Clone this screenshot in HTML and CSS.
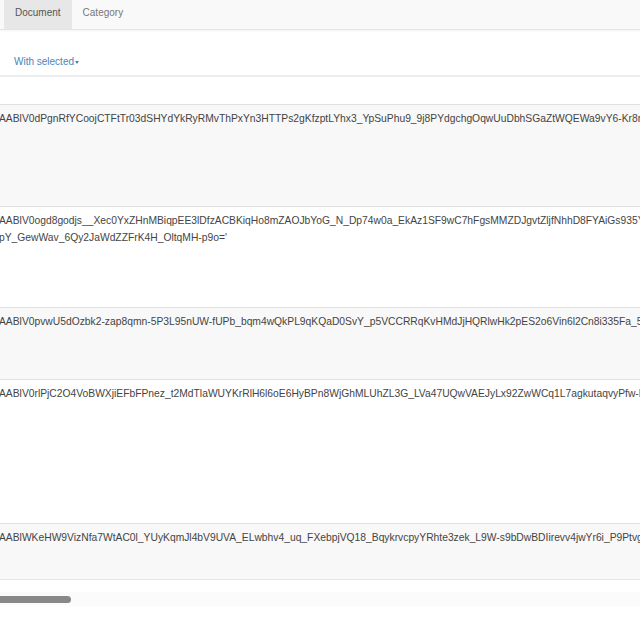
FILE: index.html
```html
<!DOCTYPE html>
<html lang="en">
<head>
    <meta charset="UTF-8">
    <title>Documents</title>
    <link rel="stylesheet" href="styles.css">
</head>
<body>

<div class="navbar">
    <ul class="nav">
        <li class="active"><a href="#">Document</a></li>
        <li><a href="#">Category</a></li>
    </ul>
</div>

<div class="actions">
    <a href="#" class="dropdown">With selected<span class="caret"></span></a>
</div>

<div class="table-wrap">
    <table class="grid">
        <tr class="r1"><td>AABlV0dPgnRfYCoojCTFtTr03dSHYdYkRyRMvThPxYn3HTTPs2gKfzptLYhx3_YpSuPhu9_9j8PYdgchgOqwUuDbhSGaZtWQEWa9vY6-Kr8ry</td></tr>
        <tr class="r2"><td>AABlV0ogd8godjs__Xec0YxZHnMBiqpEE3lDfzACBKiqHo8mZAOJbYoG_N_Dp74w0a_EkAz1SF9wC7hFgsMMZDJgvtZljfNhhD8FYAiGs935Y<br>pY_GewWav_6Qy2JaWdZZFrK4H_OltqMH-p9o='</td></tr>
        <tr class="r3"><td>AABlV0pvwU5dOzbk2-zap8qmn-5P3L95nUW-fUPb_bqm4wQkPL9qKQaD0SvY_p5VCCRRqKvHMdJjHQRlwHk2pES2o6Vin6l2Cn8i335Fa_5</td></tr>
        <tr class="r4"><td>AABlV0rlPjC2O4VoBWXjiEFbFPnez_t2MdTlaWUYKrRlH6l6oE6HyBPn8WjGhMLUhZL3G_LVa47UQwVAEJyLx92ZwWCq1L7agkutaqvyPfw-R</td></tr>
        <tr class="r5"><td>AABlWKeHW9VizNfa7WtAC0l_YUyKqmJl4bV9UVA_ELwbhv4_uq_FXebpjVQ18_BqykrvcpyYRhte3zek_L9W-s9bDwBDIirevv4jwYr6i_P9Ptvg</td></tr>
    </table>
</div>

<div class="scrollbar">
    <div class="thumb"></div>
</div>

</body>
</html>
```

FILE: styles.css
```css
body {
    margin: 0;
    font-family: "Liberation Sans", Arial, sans-serif;
    background-color: #ffffff;
    color: #333;
    overflow: hidden;
}

a {
    text-decoration: none;
}

.navbar {
    height: 29px;
    background-color: #f9f9f9;
    border-bottom: 1px solid #e4e4e4;
    box-shadow: 0 1px 2px rgba(0, 0, 0, 0.05);
}

.nav {
    display: flex;
    margin: 0;
    padding: 0 0 0 4px;
    list-style: none;
}

.nav li a {
    display: block;
    height: 29px;
    line-height: 25px;
    padding: 0 11px;
    font-size: 10px;
    color: #777;
}

.nav li.active a {
    background-color: #e7e7e7;
    color: #555;
}

.actions {
    height: 45px;
    padding-left: 14px;
    border-bottom: 2px solid #ececec;
}

.dropdown {
    display: inline-block;
    margin-top: 26px;
    font-size: 10px;
    line-height: 12px;
    color: #4a85c0;
}

.caret {
    display: inline-block;
    width: 0;
    height: 0;
    margin-left: 1px;
    vertical-align: middle;
    border-top: 3px solid #4a85c0;
    border-left: 2.5px solid transparent;
    border-right: 2.5px solid transparent;
}

.table-wrap {
    margin-top: 27px;
    overflow: hidden;
    border-bottom: 1px solid #e6e6e6;
}

.grid {
    margin-left: -1px;
    border-collapse: collapse;
    white-space: nowrap;
}

.grid td {
    vertical-align: top;
    padding: 5px 0 0 0;
    font-size: 10.3px;
    line-height: 17px;
    color: #444;
    border-top: 1px solid #e0e0e0;
}

.grid tr:nth-child(odd) td {
    background-color: #f8f8f8;
}

.r1 td { height: 96px; }
.r2 td { height: 95px; }
.r3 td { height: 66px; }
.r4 td { height: 138px; }
.r5 td { height: 50px; }

.scrollbar {
    margin-top: 12px;
    height: 14px;
    background-color: #fbfbfb;
    display: flex;
    align-items: center;
}

.thumb {
    width: 71px;
    height: 7px;
    background-color: #888;
    border-radius: 0 4px 4px 0;
}
```
